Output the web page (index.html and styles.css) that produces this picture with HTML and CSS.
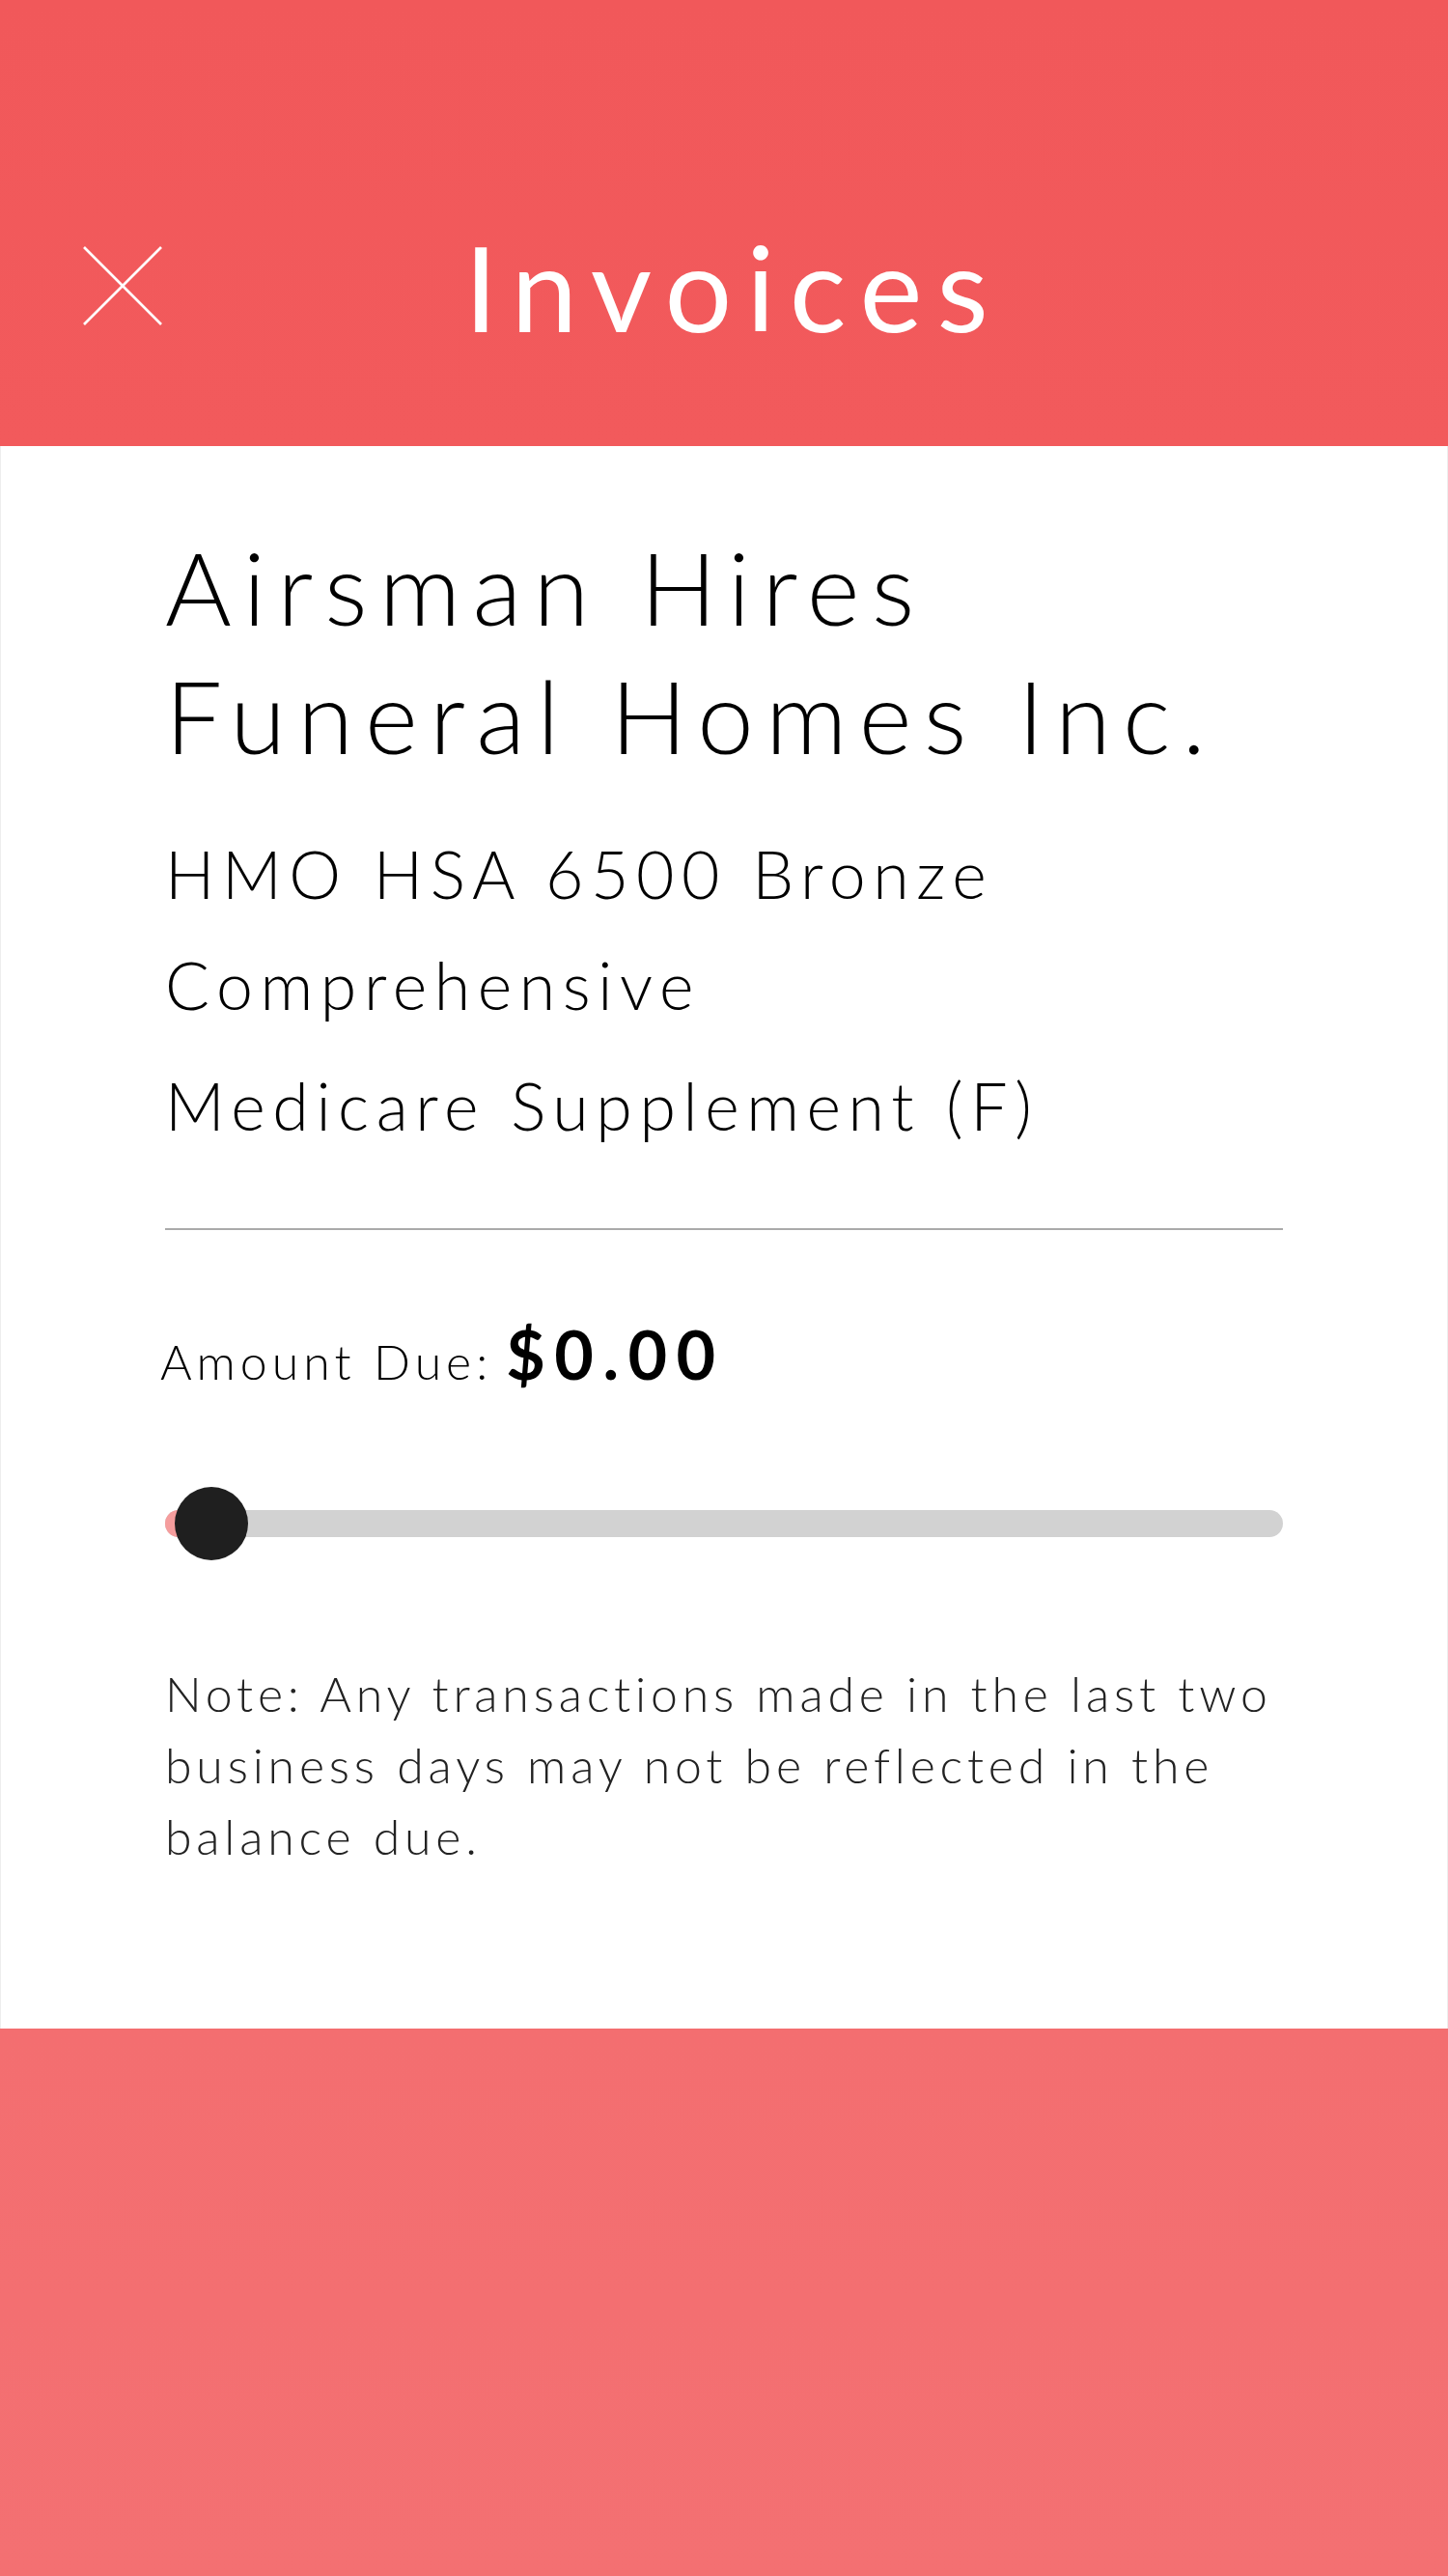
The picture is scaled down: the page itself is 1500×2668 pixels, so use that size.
FILE: index.html
```html
<!DOCTYPE html>
<html lang="en">
<head>
<meta charset="utf-8">
<title>Invoices</title>
<link rel="stylesheet" href="styles.css">
</head>
<body>
<div class="page">
  <header class="topbar">
    <button class="close" aria-label="Close">
      <svg width="82" height="82" viewBox="0 0 82 82" aria-hidden="true">
        <line x1="1" y1="1" x2="81" y2="81" stroke="#fff" stroke-width="2.6"/>
        <line x1="81" y1="1" x2="1" y2="81" stroke="#fff" stroke-width="2.6"/>
      </svg>
    </button>
    <h1 class="title">Invoices</h1>
  </header>

  <main class="card">
    <h2 class="company">Airsman Hires<br>Funeral Homes Inc.</h2>
    <div class="plans">
      <p class="plan">HMO HSA 6500 Bronze Comprehensive</p>
      <p class="plan">Medicare Supplement (F)</p>
    </div>
    <hr class="divider">
    <div class="amount">
      <span class="amount-label">Amount Due:</span>
      <span class="amount-value">$0.00</span>
    </div>
    <div class="slider">
      <div class="track">
        <div class="fill"></div>
      </div>
      <div class="thumb"></div>
    </div>
    <p class="note">Note: Any transactions made in the last two business days may not be reflected in the balance due.</p>
  </main>

  <footer class="bottom"></footer>
</div>
</body>
</html>
```

FILE: styles.css
```css
* { box-sizing: border-box; }
html, body { margin: 0; padding: 0; }
body {
  width: 1500px;
  height: 2668px;
  font-family: Lato, "Open Sans", "Liberation Sans", sans-serif;
  color: #000;
  background: #f36e70;
}
.page {
  display: flex;
  flex-direction: column;
  height: 2668px;
}
.topbar {
  height: 462px;
  flex: none;
  background: linear-gradient(180deg, #f1585a 0%, #f25a5c 100%);
  display: flex;
  align-items: flex-start;
  padding-top: 255px;
  padding-left: 86px;
}
.close {
  flex: none;
  width: 82px;
  height: 82px;
  padding: 0;
  margin: 0;
  border: 0;
  background: transparent;
  display: block;
}
.close svg { display: block; }
.title {
  margin: 0;
  margin-left: 313px;
  margin-top: -32px;
  font-weight: 400;
  font-size: 123px;
  line-height: 148px;
  letter-spacing: 15px;
  color: #fff;
}
.card {
  flex: none;
  background: #fff;
  border-left: 1px solid #eeeeee;
  border-right: 1px solid #eeeeee;
  padding: 79px 170px 162px 170px;
}
.company {
  margin: 0;
  font-weight: 300;
  font-size: 105px;
  line-height: 133px;
  letter-spacing: 12.2px;
}
.plans {
  margin-top: 40px;
  display: flex;
  flex-direction: column;
  gap: 10px;
}
.plan {
  margin: 0;
  font-weight: 300;
  font-size: 68px;
  line-height: 115px;
  letter-spacing: 7.6px;
}
.divider {
  margin: 70px 0 0 0;
  height: 2px;
  border: 0;
  background: #aaaaaa;
}
.amount {
  margin-top: 86px;
  display: flex;
  align-items: baseline;
  gap: 14px;
  margin-left: -5px;
}
.amount-label {
  font-weight: 300;
  font-size: 50px;
  line-height: 60px;
  letter-spacing: 5px;
}
.amount-value {
  font-weight: 700;
  font-size: 70px;
  line-height: 84px;
  letter-spacing: 9.5px;
}
.slider {
  position: relative;
  margin-top: 96px;
  height: 76px;
  display: flex;
  align-items: center;
}
.track {
  width: 100%;
  height: 28px;
  border-radius: 14px;
  background: #d2d2d2;
  overflow: hidden;
}
.fill {
  width: 40px;
  height: 100%;
  background: #f59d9d;
}
.thumb {
  position: absolute;
  left: 10px;
  top: 0;
  width: 76px;
  height: 76px;
  border-radius: 50%;
  background: #1f1f1f;
}
.note {
  margin: 101px 0 0 0;
  font-weight: 300;
  font-size: 50px;
  line-height: 74px;
  letter-spacing: 4.8px;
  color: #222;
}
.bottom {
  flex: 1;
  background: linear-gradient(180deg, #f36e70 0%, #f37072 100%);
}
```
